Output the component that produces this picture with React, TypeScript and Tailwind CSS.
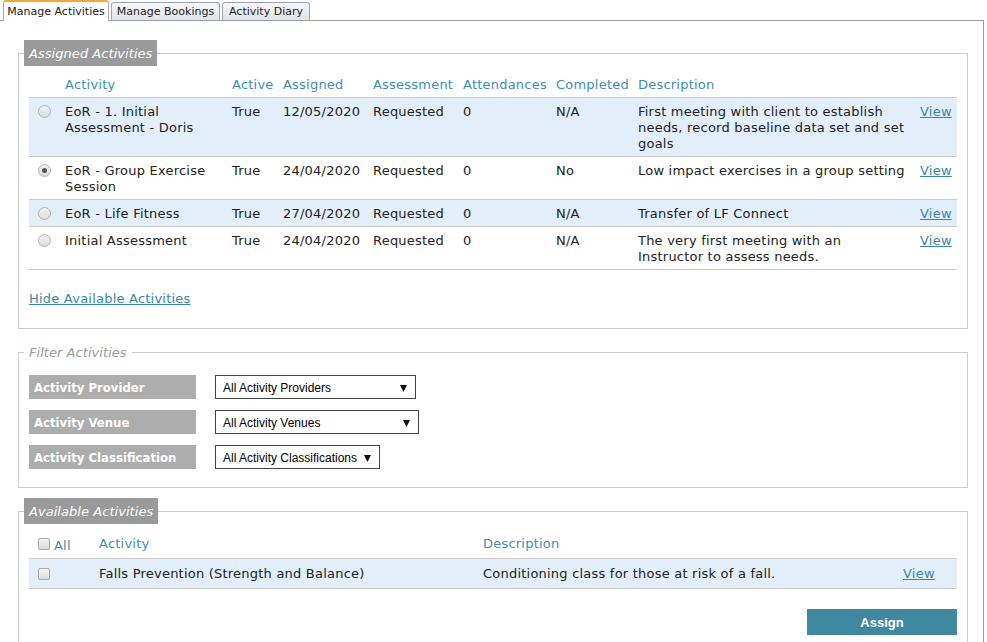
import React from "react";

const HEAD = "text-[#3f8db2]";
const LINK = "text-[#3a86a6] underline";

function Radio({ checked }: { checked?: boolean }) {
  return (
    <span className="mt-[1px] ml-[9px] flex h-[13px] w-[13px] items-center justify-center rounded-full border border-[#b3b3b3] bg-gradient-to-b from-[#f2f2f2] to-[#dcdcdc]">
      {checked ? <span className="h-[5px] w-[5px] rounded-full bg-[#555]" /> : null}
    </span>
  );
}

function Check({ className = "" }: { className?: string }) {
  return (
    <span
      className={
        "inline-block h-[12px] w-[12px] shrink-0 rounded-[2px] border border-[#a9a9a9] bg-gradient-to-b from-[#f4f4f4] to-[#dadada] " +
        className
      }
    />
  );
}

type Row = {
  activity: React.ReactNode;
  assigned: string;
  completed: string;
  desc: React.ReactNode;
  checked?: boolean;
  blue: boolean;
};

const rows: Row[] = [
  {
    activity: (
      <>
        EoR - 1. Initial
        <br />
        Assessment - Doris
      </>
    ),
    assigned: "12/05/2020",
    completed: "N/A",
    desc: (
      <>
        First meeting with client to establish
        <br />
        needs, record baseline data set and set
        <br />
        goals
      </>
    ),
    blue: true,
  },
  {
    activity: (
      <>
        EoR - Group Exercise
        <br />
        Session
      </>
    ),
    assigned: "24/04/2020",
    completed: "No",
    desc: <>Low impact exercises in a group setting</>,
    checked: true,
    blue: false,
  },
  {
    activity: <>EoR - Life Fitness</>,
    assigned: "27/04/2020",
    completed: "N/A",
    desc: <>Transfer of LF Connect</>,
    blue: true,
  },
  {
    activity: <>Initial Assessment</>,
    assigned: "24/04/2020",
    completed: "N/A",
    desc: (
      <>
        The very first meeting with an
        <br />
        Instructor to assess needs.
      </>
    ),
    blue: false,
  },
];

const GRID = "grid grid-cols-[31px_167px_51px_90px_90px_93px_82px_282px_42px]";

function Arrow() {
  return (
    <svg width="7" height="8" viewBox="0 0 7 8" className="shrink-0">
      <polygon points="0,1 7,1 3.5,8" fill="#111" />
    </svg>
  );
}

function Select({ label, w }: { label: string; w: string }) {
  return (
    <div
      className={
        "ml-[19px] flex h-[24px] items-center justify-between border border-[#444] bg-white pl-[7px] pr-[8px] pt-[1px] font-['Liberation_Sans',Arial,sans-serif] text-[12px] tracking-normal text-black " +
        w
      }
    >
      <span className="whitespace-nowrap">{label}</span>
      <Arrow />
    </div>
  );
}

function FilterLabel({ children }: { children: React.ReactNode }) {
  return (
    <div className="h-[24px] w-[167px] whitespace-nowrap bg-[#adadad] pl-[5px] pt-[1px] font-['DejaVu_Sans_Condensed','DejaVu_Sans',sans-serif] text-[13px] font-bold leading-[24px] tracking-normal text-white">
      {children}
    </div>
  );
}

export default function App() {
  return (
    <div className="h-[642px] w-[987px] overflow-hidden bg-white font-['DejaVu_Sans',Verdana,sans-serif] text-[13px] leading-[16px] tracking-[0.22px] text-[#222]">
      {/* tabs */}
      <div className="relative z-10 flex h-[21px] items-end pl-[3px] text-[11px] tracking-normal">
        <div className="flex h-[21px] w-[106px] items-center justify-center rounded-t-[3px] border border-b-0 border-[#a9a9a9] border-t-2 border-t-[#f2a93b] bg-white pt-[1px]">
          Manage Activities
        </div>
        <div className="mb-[1px] ml-[2px] flex h-[18px] w-[109px] items-center justify-center rounded-t-[3px] border border-b-0 border-[#9aa3b3] bg-gradient-to-b from-[#f7f8fb] to-[#dfe3ec] pt-[1px]">
          Manage Bookings
        </div>
        <div className="mb-[1px] ml-[2px] flex h-[18px] w-[88px] items-center justify-center rounded-t-[3px] border border-b-0 border-[#9aa3b3] bg-gradient-to-b from-[#f7f8fb] to-[#dfe3ec] pt-[1px]">
          Activity Diary
        </div>
      </div>

      {/* panel */}
      <div className="-mt-px h-[700px] w-[984px] border-r border-t border-[#9c9c9c] pl-[18px] pt-[19px]">
        {/* Assigned Activities */}
        <fieldset className="w-[950px] border border-[#ccc] px-[5px] pb-[21px]">
          <legend className="bg-[#9a9a9a] px-[5px] pb-[4px] pt-[6px] italic leading-[16px] tracking-[0.05px] text-white">
            Assigned Activities
          </legend>
          <div className="px-[5px] pt-[5px]">
            <div className={GRID + " border-b border-[#ccc] pb-[4px] pt-[6px] " + HEAD}>
              <div />
              <div className="pl-[5px]">Activity</div>
              <div className="pl-[5px]">Active</div>
              <div className="pl-[5px]">Assigned</div>
              <div className="pl-[5px]">Assessment</div>
              <div className="pl-[5px]">Attendances</div>
              <div className="pl-[5px]">Completed</div>
              <div className="pl-[5px]">Description</div>
              <div />
            </div>
            {rows.map((r, i) => (
              <div
                key={i}
                className={
                  GRID +
                  " whitespace-nowrap border-b border-[#ccc] pb-[4px] pt-[6px] " +
                  (r.blue ? "bg-[#e3eefb]" : "bg-white")
                }
              >
                <div className="flex items-start">
                  <Radio checked={r.checked} />
                </div>
                <div className="pl-[5px]">{r.activity}</div>
                <div className="pl-[5px]">True</div>
                <div className="pl-[5px]">{r.assigned}</div>
                <div className="pl-[5px]">Requested</div>
                <div className="pl-[5px]">0</div>
                <div className="pl-[5px]">{r.completed}</div>
                <div className="pl-[5px]">{r.desc}</div>
                <div className="pl-[5px]">
                  <span className={LINK}>View</span>
                </div>
              </div>
            ))}
            <div className="mt-[21px]">
              <span className={LINK}>Hide Available Activities</span>
            </div>
          </div>
        </fieldset>

        {/* Filter Activities */}
        <fieldset className="mt-[10px] w-[950px] border border-[#ccc] px-[5px] pb-[18px]">
          <legend className="px-[5px] pb-[4px] pt-[6px] italic leading-[16px] tracking-[0.05px] text-[#9a9a9a]">
            Filter Activities
          </legend>
          <div className="flex flex-col gap-[11px] px-[5px] pt-[10px]">
            <div className="flex items-center">
              <FilterLabel>Activity Provider</FilterLabel>
              <Select label="All Activity Providers" w="w-[201px]" />
            </div>
            <div className="flex items-center">
              <FilterLabel>Activity Venue</FilterLabel>
              <Select label="All Activity Venues" w="w-[204px]" />
            </div>
            <div className="flex items-center">
              <FilterLabel>Activity Classification</FilterLabel>
              <Select label="All Activity Classifications" w="w-[165px]" />
            </div>
          </div>
        </fieldset>

        {/* Available Activities */}
        <fieldset className="mt-[10px] w-[950px] border border-[#ccc] px-[5px] pb-[20px]">
          <legend className="bg-[#9a9a9a] px-[5px] pb-[4px] pt-[6px] italic leading-[16px] tracking-[0.05px] text-white">
            Available Activities
          </legend>
          <div className="px-[5px] pt-[6px]">
            <div className={"grid grid-cols-[65px_384px_420px_59px] border-b border-[#ccc] pb-[6px] pt-[6px] " + HEAD}>
              <div className="flex h-[16px] items-center pl-[9px]">
                <Check />
                <span className="relative top-[2px] ml-[4px]">All</span>
              </div>
              <div className="pl-[5px]">Activity</div>
              <div className="pl-[5px]">Description</div>
              <div />
            </div>
            <div className="grid grid-cols-[65px_384px_420px_59px] whitespace-nowrap border-b border-[#ccc] bg-[#e3eefb] pb-[6px] pt-[7px]">
              <div className="flex h-[16px] items-center pl-[9px]">
                <Check />
              </div>
              <div className="pl-[5px]">Falls Prevention (Strength and Balance)</div>
              <div className="pl-[5px]">Conditioning class for those at risk of a fall.</div>
              <div className="pl-[5px]">
                <span className={LINK}>View</span>
              </div>
            </div>
            <div className="mt-[20px] flex justify-end">
              <button className="h-[26px] w-[150px] bg-[#3f889f] pt-[1px] font-['Liberation_Sans',Arial,sans-serif] text-[13px] font-bold tracking-normal text-white">
                Assign
              </button>
            </div>
          </div>
        </fieldset>
      </div>
    </div>
  );
}
